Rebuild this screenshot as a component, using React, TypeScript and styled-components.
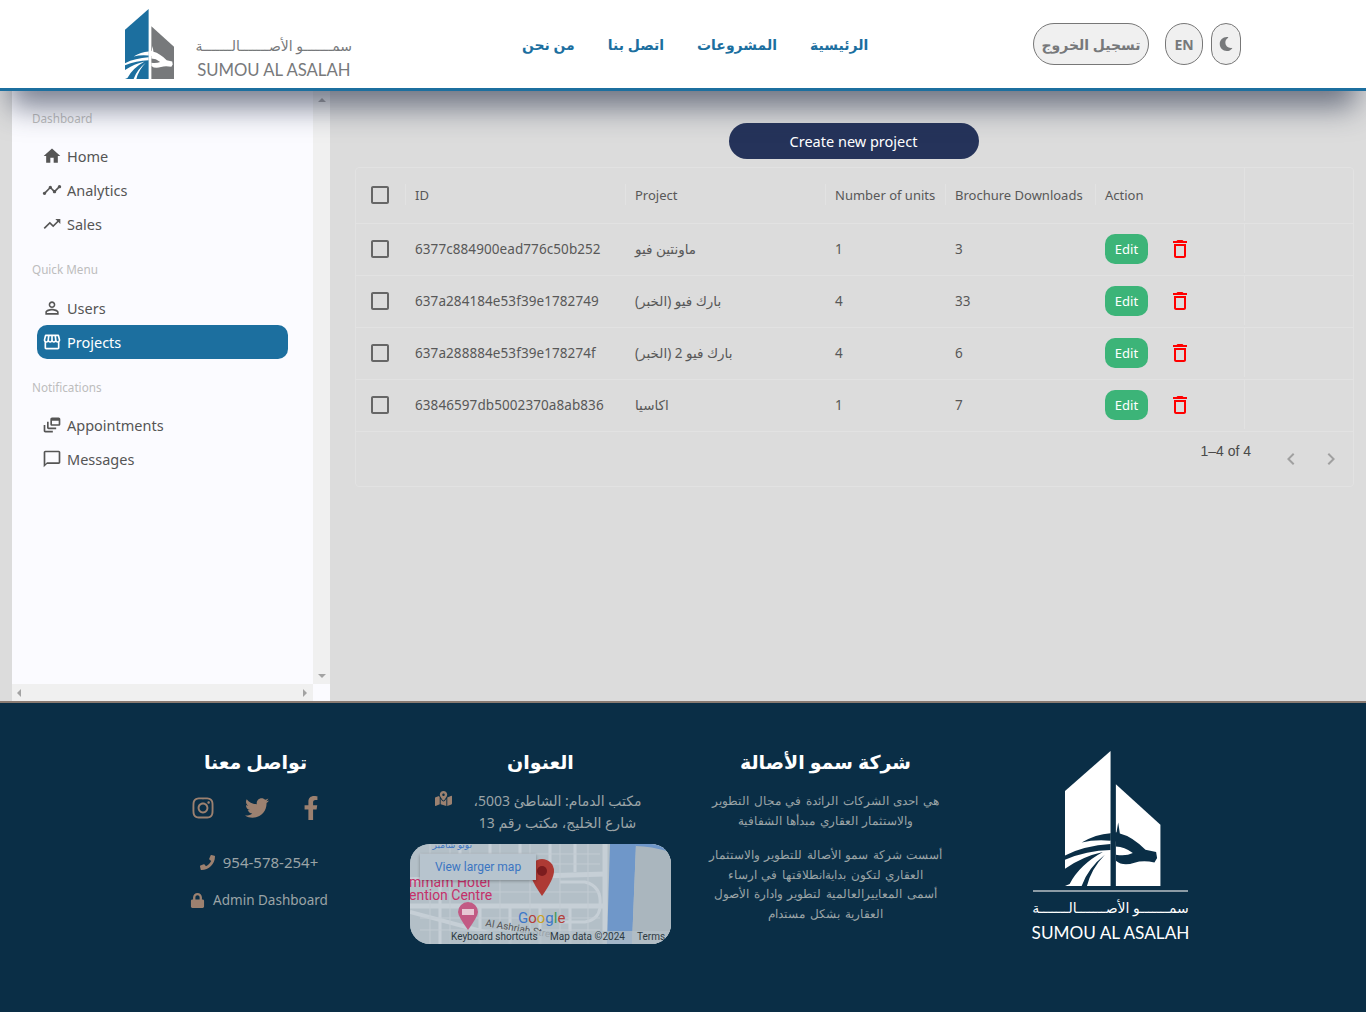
import React from 'react';
import styled, { createGlobalStyle } from 'styled-components';
import { FaFacebookF, FaInstagram, FaLock, FaMapMarkedAlt, FaMoon, FaPhone, FaTwitter } from 'react-icons/fa';

const UI_FONT = `'Noto Sans', 'DejaVu Sans', sans-serif`;

const GlobalStyle = createGlobalStyle`
  html, body { margin: 0; padding: 0; background: #dcdcdc; }
  body { font-family: ${UI_FONT}; }
  * { box-sizing: border-box; }
`;

const Page = styled.div`
  width: 1366px;
  height: 1012px;
  display: flex;
  flex-direction: column;
  overflow: hidden;
`;

/* header */
const Header = styled.header`
  position: relative;
  z-index: 5;
  flex: 0 0 91px;
  background: #fff;
  border-bottom: 3px solid #1c6f9f;
  box-shadow: 0 26px 30px -10px rgba(40, 50, 75, 0.62);
  padding: 0 125px;
  display: flex;
  align-items: center;
  justify-content: space-between;
`;

const Brand = styled.div`
  display: flex;
  align-items: center;
  gap: 21px;
`;

const BrandText = styled.div`
  display: flex;
  flex-direction: column;
  align-items: center;
  padding-top: 28px;
  color: #77797b;
`;

const LogoArabic = styled.div`
  direction: rtl;
  font-size: 14px;
  line-height: 22px;
  white-space: nowrap;
`;

const LogoLatin = styled.div`
  font-family: 'Lato', sans-serif;
  font-size: ${p => p.$size}px;
  line-height: 22px;
  margin-top: ${p => p.$mt}px;
  white-space: nowrap;
`;

const LogoSvg = styled.svg`
  display: block;
  margin-left: ${p => p.$shift || 0}px;
`;

const Nav = styled.nav`
  display: flex;
  direction: rtl;
  gap: 33px;
  margin-left: 5px;
`;

const NavLink = styled.a`
  color: #1c6f9f;
  font-weight: 700;
  font-size: 14px;
`;

const HeaderActions = styled.div`
  display: flex;
  align-items: center;
`;

const PillButton = styled.button`
  height: 42px;
  width: ${p => p.$w}px;
  margin-left: ${p => p.$ml || 0}px;
  border: 1px solid #777;
  border-radius: 21px;
  background: #f0f0f0;
  color: #77797b;
  font-family: ${UI_FONT};
  font-weight: 700;
  font-size: 14px;
  padding: 0;
  display: flex;
  align-items: center;
  justify-content: center;
`;

/* body */
const Body = styled.div`
  flex: 0 0 610px;
  display: flex;
  padding-left: 12px;
  background: #dcdcdc;
`;

const Sidebar = styled.aside`
  width: 318px;
  display: grid;
  grid-template-columns: 301px 17px;
  grid-template-rows: 593px 17px;
`;

const SidebarContent = styled.div`
  background: #fbfbff;
  padding: 20px 0 0 20px;
`;

const SectionTitle = styled.div`
  font-size: 11.7px;
  line-height: 14px;
  color: #bdbdbd;
  margin-bottom: ${p => p.$mb}px;
`;

const MenuList = styled.ul`
  list-style: none;
  margin: 0 0 21px;
  padding: 0 0 0 5px;
  width: 256px;
`;

const MenuItem = styled.li`
  height: 34px;
  display: flex;
  align-items: center;
  gap: 5px;
  padding-left: 5px;
  border-radius: 10px;
  font-size: 14.5px;
  background: ${p => (p.$active ? '#1c6f9f' : 'transparent')};
  color: ${p => (p.$active ? '#fff' : '#555')};
`;

const ScrollTrackV = styled.div`
  background: #f0f0f0;
  display: flex;
  flex-direction: column;
  align-items: center;
  justify-content: space-between;
  padding: 7px 0 6px;
`;

const ScrollTrackH = styled.div`
  background: #f0f0f0;
  display: flex;
  align-items: center;
  justify-content: space-between;
  padding: 0 6px 0 5px;
`;

const ScrollCorner = styled.div`
  background: #fbfbff;
`;

const Arrow = styled.span`
  width: 0;
  height: 0;
  border: 4px solid transparent;
  ${p => p.$dir === 'up' && 'border-top: 0; border-bottom: 4px solid #a3a3a3;'}
  ${p => p.$dir === 'down' && 'border-bottom: 0; border-top: 4px solid #a3a3a3;'}
  ${p => p.$dir === 'left' && 'border-left: 0; border-right: 4px solid #a3a3a3;'}
  ${p => p.$dir === 'right' && 'border-right: 0; border-left: 4px solid #a3a3a3;'}
`;

const Main = styled.main`
  flex: 1;
  display: flex;
  flex-direction: column;
  align-items: center;
  padding: 32px 12px 0 25px;
`;

const CreateButton = styled.button`
  width: 250px;
  height: 36px;
  margin-right: 2px;
  border: 0;
  border-radius: 18px;
  background: #25335a;
  color: #fff;
  font-family: ${UI_FONT};
  font-size: 14.5px;
  padding: 0;
`;

const DataGrid = styled.div`
  width: 999px;
  height: 320px;
  margin-top: 8px;
  border: 1px solid #e2e2e2;
  border-radius: 4px;
  color: #585858;
  font-size: 13.5px;
`;

const GridRow = styled.div`
  display: grid;
  grid-template-columns: 49px 220px 200px 120px 150px 150px 1fr;
  height: ${p => p.$h}px;
  padding-bottom: 2px;
  border-bottom: 1px solid #e2e2e2;
  align-items: center;
`;

const Cell = styled.div`
  padding-left: 10px;
  white-space: nowrap;
  height: 100%;
  display: flex;
  align-items: center;
  gap: 20px;
  letter-spacing: 0.08px;
  border-right: ${p => (p.$end ? '1px solid #e2e2e2' : '0')};
`;

const HeadCell = styled(Cell)`
  position: relative;
  font-size: 13px;
  letter-spacing: 0;
  &::before {
    content: '';
    position: absolute;
    left: 0;
    top: 16px;
    bottom: 16px;
    width: 1px;
    background: #e2e2e2;
  }
`;

const CheckCell = styled.div`
  display: flex;
  justify-content: center;
  padding-right: 1px;
`;

const EditButton = styled.button`
  width: 43px;
  height: 30px;
  border: 0;
  border-radius: 10px;
  background: #3cb478;
  color: #fff;
  font-family: ${UI_FONT};
  font-size: 13px;
  padding: 0;
`;

const GridFooter = styled.div`
  display: flex;
  justify-content: flex-end;
  padding-right: 10px;
`;

const PageCount = styled.span`
  font-family: 'Liberation Sans', sans-serif;
  font-size: 14px;
  line-height: 16px;
  color: #4a4a4a;
  margin: 11px 28px 0 0;
`;

const PageArrows = styled.div`
  display: flex;
  gap: 16px;
  margin-top: 15px;
`;

/* footer */
const Footer = styled.footer`
  flex: 1;
  background: #0a2e46;
  border-top: 2px solid #8a7b72;
  direction: rtl;
  padding: 0 113px;
  display: grid;
  grid-template-columns: repeat(4, 285px);
`;

const FooterCol = styled.div`
  display: flex;
  flex-direction: column;
  align-items: center;
  padding-top: ${p => p.$pt ?? 45}px;
`;

const FooterTitle = styled.h4`
  margin: 0 0 15px;
  color: #fff;
  font-size: 19px;
  line-height: 28px;
  font-weight: 700;
`;

const FooterText = styled.p`
  margin: 0 0 15px;
  width: 260px;
  color: #9ba4a6;
  font-size: 12.4px;
  word-spacing: 1.3px;
  line-height: 19.5px;
  text-align: center;
  font-weight: 300;
`;

const LogoRule = styled.div`
  width: 155px;
  height: 2px;
  background: #8c9ba5;
  margin: 4px 0 5px;
`;

const FooterBrandText = styled.div`
  display: flex;
  flex-direction: column;
  align-items: center;
  color: #fff;
`;

const Address = styled.div`
  width: 260px;
  position: relative;
  color: #9ba4a6;
  font-size: 14px;
  line-height: 22px;
  text-align: center;
  padding-left: 34px;
  margin: -1px 0 10px;
`;

const AddressIcon = styled.span`
  position: absolute;
  left: 24px;
  top: 0;
  color: #9c8170;
  font-size: 17px;
`;

const MapFrame = styled.div`
  position: relative;
  width: 261px;
  height: 100px;
  direction: ltr;
  border-radius: 20px;
  overflow: hidden;
  background: #b3bfc7;
`;

const MapSvg = styled.svg`
  display: block;
`;

const MapLink = styled.div`
  position: absolute;
  left: 10px;
  top: 10px;
  width: 116px;
  height: 26px;
  background: #b7c4ce;
  box-shadow: 0 1px 3px rgba(0, 0, 0, 0.3);
  color: #3b75c2;
  font-family: 'Roboto', sans-serif;
  font-size: 12px;
  line-height: 26px;
  text-align: center;
`;

const Socials = styled.div`
  direction: ltr;
  display: flex;
  align-items: center;
  gap: 30px;
  color: #9c8170;
  font-size: 24px;
  margin: 5px 0 31px 2px;
  height: 24px;
`;

const ContactLine = styled.div`
  direction: ltr;
  display: flex;
  align-items: center;
  gap: 8px;
  color: #9ba4a6;
  font-size: ${p => p.$fs}px;
  line-height: 22px;
  margin: 0 0 16px 7px;
  svg { color: #9c8170; font-size: 15px; }
`;

const MuiIcon = ({ d, size = 20, color = 'currentColor' }: { d: string; size?: number; color?: string }) => (
  <svg width={size} height={size} viewBox="0 0 24 24" fill={color}>
    <path d={d} />
  </svg>
);

const icons = {
  home: 'M10 20v-6h4v6h5v-8h3L12 3 2 12h3v8z',
  timeline:
    'M23 8c0 1.1-.9 2-2 2-.18 0-.35-.02-.51-.07l-3.56 3.55c.05.16.07.34.07.52 0 1.1-.9 2-2 2s-2-.9-2-2c0-.18.02-.36.07-.52l-2.55-2.55c-.16.05-.34.07-.52.07s-.36-.02-.52-.07l-4.55 4.56c.05.16.07.33.07.51 0 1.1-.9 2-2 2s-2-.9-2-2 .9-2 2-2c.18 0 .35.02.51.07l4.56-4.55C8.02 9.36 8 9.18 8 9c0-1.1.9-2 2-2s2 .9 2 2c0 .18-.02.36-.07.52l2.55 2.55c.16-.05.34-.07.52-.07s.36.02.52.07l3.55-3.56C19.02 8.35 19 8.18 19 8c0-1.1.9-2 2-2s2 .9 2 2z',
  trending: 'M16 6l2.29 2.29-4.88 4.88-4-4L2 16.59 3.41 18l6-6 4 4 6.3-6.29L22 12V6z',
  user: 'M12 5.9c1.16 0 2.1.94 2.1 2.1s-.94 2.1-2.1 2.1S9.9 9.16 9.9 8s.94-2.1 2.1-2.1m0 9c2.97 0 6.1 1.46 6.1 2.1v1.1H5.9V17c0-.64 3.13-2.1 6.1-2.1M12 4C9.79 4 8 5.79 8 8s1.79 4 4 4 4-1.79 4-4-1.79-4-4-4zm0 9c-2.67 0-8 1.34-8 4v3h16v-3c0-2.66-5.33-4-8-4z',
  store:
    'M21.9 8.89l-1.05-4.37c-.22-.9-1-1.52-1.91-1.52H5.05c-.9 0-1.69.63-1.9 1.52L2.1 8.89c-.24 1.02-.02 2.06.62 2.88.08.11.19.19.28.29V19c0 1.1.9 2 2 2h14c1.1 0 2-.9 2-2v-6.94c.09-.09.2-.18.28-.28.64-.82.87-1.87.62-2.89zm-2.99-3.9l1.05 4.37c.1.42.01.84-.25 1.17-.14.18-.44.47-.94.47-.61 0-1.14-.49-1.21-1.14L16.98 5l1.93-.01zM13 5h1.96l.54 4.52c.05.39-.07.78-.33 1.07-.22.26-.54.41-.95.41-.67 0-1.22-.59-1.22-1.31V5zM8.49 9.52L9.04 5H11v4.69c0 .72-.55 1.31-1.29 1.31-.34 0-.65-.15-.89-.41-.25-.29-.37-.68-.33-1.07zm-4.45-.16L5.05 5h1.97l-.58 4.86c-.08.65-.6 1.14-1.21 1.14-.49 0-.8-.29-.93-.47-.27-.32-.36-.75-.26-1.17zM5 19v-6.03c.08.01.15.03.23.03.87 0 1.66-.36 2.24-.95.6.6 1.4.95 2.31.95.87 0 1.65-.36 2.23-.93.59.57 1.39.93 2.29.93.84 0 1.64-.35 2.24-.95.58.59 1.37.95 2.24.95.08 0 .15-.02.23-.03V19H5z',
  feed: 'M8 8H6v7c0 1.1.9 2 2 2h9v-2H8V8zM20 3h-8c-1.1 0-2 .9-2 2v6c0 1.1.9 2 2 2h8c1.1 0 2-.9 2-2V5c0-1.1-.9-2-2-2zm0 8h-8V7h8v4zM4 12H2v7c0 1.1.9 2 2 2h9v-2H4v-7z',
  chat: 'M20 2H4c-1.1 0-2 .9-2 2v18l4-4h14c1.1 0 2-.9 2-2V4c0-1.1-.9-2-2-2zm0 14H6l-2 2V4h16v12z',
  check: 'M19 5v14H5V5h14m0-2H5c-1.1 0-2 .9-2 2v14c0 1.1.9 2 2 2h14c1.1 0 2-.9 2-2V5c0-1.1-.9-2-2-2z',
  trash: 'M6 19c0 1.1.9 2 2 2h8c1.1 0 2-.9 2-2V7H6v12zM8 9h8v10H8V9zm7.5-5l-1-1h-5l-1 1H5v2h14V4z',
  prev: 'M15.41 16.59 10.83 12l4.58-4.59L14 6l-6 6 6 6 1.41-1.41z',
  next: 'M8.59 16.59 13.17 12 8.59 7.41 10 6l6 6-6 6-1.41-1.41z',
};

const Logo = ({ left, right, cut, height, shift }: { left: string; right: string; cut: string; height: number; shift?: number }) => (
  <LogoSvg height={height} viewBox="136 18 287 406" $shift={shift}>
    <path d="M136 138 273 18V424H136z" fill={left} />
    <path d="M289 118 423 240V424H289z" fill={right} />
    <path d="M186 293Q228 268 273 265V288Q225 284 186 293z" fill={cut} />
    <path d="M136 332Q195 303 273 298V316Q200 318 136 345z" fill={cut} />
    <path d="M136 372Q190 335 250 322 180 360 150 418L136 424z" fill={cut} />
    <path d="M256 330Q215 372 202 424H186Q205 370 256 330z" fill={cut} />
    <path d="M273 265 291 262 296 233 301 266Q338 275 378 315L410 322 413 340 405 353Q370 346 345 354 310 366 289 348V330Q320 335 340 325 315 305 289 305V290L273 286z" fill={cut} />
  </LogoSvg>
);

const MapDrawing = () => (
  <MapSvg width="261" height="100" viewBox="0 0 261 100">
    <rect width="261" height="100" fill="#b3bfc7" />
    <g stroke="#c6cfd6" strokeWidth="3" fill="none">
      <path d="M-5 62 L195 62" strokeWidth="5" />
      <path d="M-5 36 L195 30" strokeWidth="5" />
      <path d="M0 68 L90 92" strokeWidth="4" />
      <path d="M195 0 V100" strokeWidth="5" />
      <path d="M50 0V30M80 0V30M110 0V28M140 0V28M165 0V28" />
      <path d="M30 36V100M70 60V100M100 60V100M130 60V100M160 60V100" />
      <path d="M150 38 H175 Q192 42 190 62 M150 78 H175 Q188 76 190 64" />
    </g>
    <g stroke="#c2cbd2" strokeWidth="1" fill="none">
      <path d="M10 10H190M10 20H190M10 48H190M10 74H190M10 86H190" />
      <path d="M20 0V100M40 0V100M60 0V100M90 0V100M120 0V100M150 0V100M178 0V100" />
    </g>
    <path d="M200 0H226L222 100H197z" fill="#6f97c9" />
    <path d="M226 0H261V100H222z" fill="#aab6be" />
    <path d="M226 0H261V8Q240 2 226 2z" fill="#6f97c9" />
    <path d="M132 52Q120 35 120 27A12 12 0 0 1 144 27Q144 35 132 52z" fill="#ae3a34" />
    <circle cx="132" cy="27" r="5" fill="#7c1c1e" />
    <g fontFamily="Roboto, sans-serif">
      <text x="-1" y="43" fontSize="14" fill="#c5306a">mmam Hotel</text>
      <text x="-1" y="56" fontSize="14" fill="#c5306a">ention Centre</text>
      <text x="75" y="82" fontSize="10" fill="#555" transform="rotate(10 75 82)">Al Ashriah Stre</text>
      <text x="108" y="79" fontSize="15">
        <tspan fill="#3d78c9">G</tspan>
        <tspan fill="#b3403a">o</tspan>
        <tspan fill="#c9a227">o</tspan>
        <tspan fill="#3d78c9">g</tspan>
        <tspan fill="#3f9858">l</tspan>
        <tspan fill="#b3403a">e</tspan>
      </text>
    </g>
    <path d="M58 86Q48 72 48 68A10 10 0 0 1 68 68Q68 72 58 86z" fill="#c25a84" />
    <rect x="52" y="65" width="12" height="6" fill="#e6c8d4" />
    <rect x="38" y="87" width="223" height="13" fill="#b3bfc7" opacity=".75" />
    <g fontFamily="Roboto, sans-serif" fontSize="10" fill="#2e3a42">
      <text x="41" y="96">Keyboard shortcuts</text>
      <text x="140" y="96">Map data ©2024</text>
      <text x="227" y="96">Terms</text>
    </g>
    <text x="62" y="4" fontSize="9" fill="#3b75c2" direction="rtl">نوتو شامبر</text>
  </MapSvg>
);

const rows = [
  { id: '6377c884900ead776c50b252', project: 'ماونتين فيو', units: 1, downloads: 3 },
  { id: '637a284184e53f39e1782749', project: 'بارك فيو (الخبر)', units: 4, downloads: 33 },
  { id: '637a288884e53f39e178274f', project: 'بارك فيو 2 (الخبر)', units: 4, downloads: 6 },
  { id: '63846597db5002370a8ab836', project: 'اكاسيا', units: 1, downloads: 7 },
];

const menu = [
  {
    title: 'Dashboard',
    titleGap: 14,
    items: [
      { label: 'Home', icon: icons.home },
      { label: 'Analytics', icon: icons.timeline },
      { label: 'Sales', icon: icons.trending },
    ],
  },
  {
    title: 'Quick Menu',
    titleGap: 15,
    items: [
      { label: 'Users', icon: icons.user },
      { label: 'Projects', icon: icons.store, active: true },
    ],
  },
  {
    title: 'Notifications',
    titleGap: 14,
    items: [
      { label: 'Appointments', icon: icons.feed },
      { label: 'Messages', icon: icons.chat },
    ],
  },
];

const ARABIC_BRAND = 'سمـــــــو الأصـــــــالـــــــة';

const App: React.FC = () => {
  return (
    <Page>
      <GlobalStyle />
      <Header>
        <Brand>
          <Logo left="#1c6f9f" right="#77797b" cut="#fff" height={70} />
          <BrandText>
            <LogoArabic>{ARABIC_BRAND}</LogoArabic>
            <LogoLatin $size={16.7} $mt={2}>SUMOU AL ASALAH</LogoLatin>
          </BrandText>
        </Brand>
        <Nav>
          <NavLink>الرئيسية</NavLink>
          <NavLink>المشروعات</NavLink>
          <NavLink>اتصل بنا</NavLink>
          <NavLink>من نحن</NavLink>
        </Nav>
        <HeaderActions>
          <PillButton $w={116}>تسجيل الخروج</PillButton>
          <PillButton $w={38} $ml={16}>EN</PillButton>
          <PillButton $w={30} $ml={8}><FaMoon /></PillButton>
        </HeaderActions>
      </Header>

      <Body>
        <Sidebar>
          <SidebarContent>
            {menu.map(section => (
              <div key={section.title}>
                <SectionTitle $mb={section.titleGap}>{section.title}</SectionTitle>
                <MenuList>
                  {section.items.map(item => (
                    <MenuItem key={item.label} $active={item.active}>
                      <MuiIcon d={item.icon} />
                      {item.label}
                    </MenuItem>
                  ))}
                </MenuList>
              </div>
            ))}
          </SidebarContent>
          <ScrollTrackV>
            <Arrow $dir="up" />
            <Arrow $dir="down" />
          </ScrollTrackV>
          <ScrollTrackH>
            <Arrow $dir="left" />
            <Arrow $dir="right" />
          </ScrollTrackH>
          <ScrollCorner />
        </Sidebar>

        <Main>
          <CreateButton>Create new project</CreateButton>
          <DataGrid>
            <GridRow $h={56}>
              <CheckCell><MuiIcon d={icons.check} size={24} color="#666" /></CheckCell>
              <HeadCell>ID</HeadCell>
              <HeadCell>Project</HeadCell>
              <HeadCell>Number of units</HeadCell>
              <HeadCell>Brochure Downloads</HeadCell>
              <HeadCell $end>Action</HeadCell>
              <div />
            </GridRow>
            {rows.map(row => (
              <GridRow key={row.id} $h={52}>
                <CheckCell><MuiIcon d={icons.check} size={24} color="#666" /></CheckCell>
                <Cell>{row.id}</Cell>
                <Cell>{row.project}</Cell>
                <Cell>{row.units}</Cell>
                <Cell>{row.downloads}</Cell>
                <Cell $end>
                  <EditButton>Edit</EditButton>
                  <MuiIcon d={icons.trash} size={24} color="#f00" />
                </Cell>
                <div />
              </GridRow>
            ))}
            <GridFooter>
              <PageCount>1–4 of 4</PageCount>
              <PageArrows>
                <MuiIcon d={icons.prev} size={24} color="#a0a0a0" />
                <MuiIcon d={icons.next} size={24} color="#a0a0a0" />
              </PageArrows>
            </GridFooter>
          </DataGrid>
        </Main>
      </Body>

      <Footer>
        <FooterCol $pt={48}>
          <Logo left="#fff" right="#fff" cut="#0a2e46" height={135} shift={5} />
          <LogoRule />
          <FooterBrandText>
            <LogoArabic>{ARABIC_BRAND}</LogoArabic>
            <LogoLatin $size={17.2} $mt={3}>SUMOU AL ASALAH</LogoLatin>
          </FooterBrandText>
        </FooterCol>
        <FooterCol>
          <FooterTitle>شركة سمو الأصالة</FooterTitle>
          <FooterText>
            هي احدى الشركات الرائدة في مجال التطوير
            <br />
            والاستثمار العقاري مبدأها الشفافية
          </FooterText>
          <FooterText>
            أسست شركة سمو الأصالة للتطوير والاستثمار
            <br />
            العقاري لتكون بدايةانطلاقتها في ارساء
            <br />
            أسمى المعاييرالعالمية لتطوير وادارة الأصول
            <br />
            العقارية بشكل مستدام
          </FooterText>
        </FooterCol>
        <FooterCol>
          <FooterTitle>العنوان</FooterTitle>
          <Address>
            <AddressIcon><FaMapMarkedAlt /></AddressIcon>
            مكتب الدمام: الشاطئ 5003،
            <br />
            شارع الخليج، مكتب رقم 13
          </Address>
          <MapFrame>
            <MapDrawing />
            <MapLink>View larger map</MapLink>
          </MapFrame>
        </FooterCol>
        <FooterCol>
          <FooterTitle>تواصل معنا</FooterTitle>
          <Socials>
            <FaInstagram />
            <FaTwitter />
            <FaFacebookF />
          </Socials>
          <ContactLine $fs={15}><FaPhone /> 954-578-254+</ContactLine>
          <ContactLine $fs={13.5}><FaLock /> Admin Dashboard</ContactLine>
        </FooterCol>
      </Footer>
    </Page>
  );
};

export default App;
